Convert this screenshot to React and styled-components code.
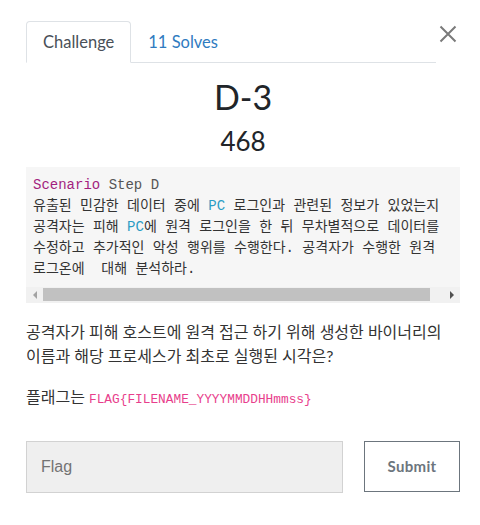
import React from 'react';
import styled, { createGlobalStyle } from 'styled-components';

const Global = createGlobalStyle`
  body {
    margin: 0;
    background: #fff;
    font-family: Lato, "Noto Sans CJK KR", sans-serif;
    color: #212529;
  }
`;

const Page = styled.div`
  padding: 21px 20px 0 26px;
`;

const Header = styled.div`
  display: flex;
  align-items: flex-start;
`;

const TabList = styled.ul`
  flex: 1;
  display: flex;
  list-style: none;
  margin: 0;
  padding: 0;
  border-bottom: 1px solid #dee2e6;
`;

const Tab = styled.li`
  padding: 8px 16px;
  font-size: 16.5px;
  line-height: 24px;
  border: 1px solid transparent;
  border-radius: 4px 4px 0 0;
  margin-bottom: -1px;
  cursor: pointer;
  color: ${p => (p.$active ? '#495057' : '#2f7bbf')};
  background: ${p => (p.$active ? '#fff' : 'transparent')};
  border-color: ${p => (p.$active ? '#dee2e6 #dee2e6 #fff' : 'transparent')};
`;

const Close = styled.button`
  width: 24px;
  height: 24px;
  margin-top: 1px;
  padding: 0;
  border: 0;
  background: none;
  display: flex;
  align-items: center;
  justify-content: center;
  color: #7a7a7a;
`;

const Title = styled.h1`
  margin: 14px 0 0;
  text-align: center;
  font-size: 34px;
  font-weight: 400;
  line-height: 1.2;
`;

const Points = styled.h2`
  margin: 8px 0 0;
  text-align: center;
  font-size: 26px;
  font-weight: 400;
  line-height: 1.2;
`;

const CodeBox = styled.div`
  margin-top: 10px;
  background: #f6f6f6;
  overflow: hidden;
`;

const Pre = styled.pre`
  margin: 0;
  padding: 8px 7px 7px;
  font-family: "Liberation Mono", "Noto Sans CJK KR", monospace;
  font-size: 14px;
  line-height: 21px;
  color: #333;
  white-space: pre;
  overflow: hidden;
`;

const Tok = styled.span`
  color: ${p => p.$c};
`;

const ScrollBar = styled.div`
  display: flex;
  align-items: center;
  height: 16px;
  background: #f1f1f1;
`;

const Arrow = styled.div`
  width: 17px;
  height: 16px;
  display: flex;
  align-items: center;
  justify-content: center;
  &::before {
    content: '';
    border-top: 4px solid transparent;
    border-bottom: 4px solid transparent;
    ${p => (p.$dir === 'left'
      ? 'border-right: 4px solid #a3a3a3;'
      : 'border-left: 4px solid #505050;')}
  }
`;

const Thumb = styled.div`
  flex: 1;
  height: 13px;
  margin-right: 13px;
  background: #c1c1c1;
`;

const Text = styled.p`
  margin: ${p => p.$mt || 0}px 0 0;
  font-size: 16px;
  line-height: 24px;
  color: #333;
`;

const FlagCode = styled.code`
  font-family: "Liberation Mono", monospace;
  font-size: 12.8px;
  color: #e83e8c;
`;

const Form = styled.form`
  display: flex;
  gap: 21px;
  margin-top: 29px;
`;

const Input = styled.input`
  flex: 1;
  min-width: 0;
  height: 52px;
  box-sizing: border-box;
  padding: 0 14px;
  background: #efefef;
  border: 1px solid #d2d2d2;
  font-family: "Liberation Sans", Arial, sans-serif;
  font-size: 16px;
  color: #495057;
  &::placeholder {
    color: #737373;
  }
`;

const Submit = styled.button`
  width: 96px;
  height: 51px;
  background: #fff;
  border: 1px solid #6c757d;
  color: #6c757d;
  font-family: Lato, sans-serif;
  font-weight: 700;
  font-size: 15px;
  letter-spacing: 0.3px;
`;

const PC = () => <Tok $c="#2a9cc4">PC</Tok>;

export default function App() {
  return (
    <Page>
      <Global />
      <Header>
        <TabList>
          <Tab $active>Challenge</Tab>
          <Tab>11 Solves</Tab>
        </TabList>
        <Close aria-label="Close">
          <svg width="18" height="18" viewBox="0 0 18 18">
            <path d="M1.5 1.5 L16.5 16.5 M16.5 1.5 L1.5 16.5" stroke="currentColor" strokeWidth="2" />
          </svg>
        </Close>
      </Header>

      <Title>D-3</Title>
      <Points>468</Points>

      <CodeBox>
        <Pre>
          <Tok $c="#a31f7f">Scenario</Tok> <Tok $c="#555">Step D</Tok>{'\n'}
          유출된 민감한 데이터 중에 <PC /> 로그인과 관련된 정보가 있었는지{'\n'}
          공격자는 피해 <PC />에 원격 로그인을 한 뒤 무차별적으로 데이터를{'\n'}
          수정하고 추가적인 악성 행위를 수행한다. 공격자가 수행한 원격{'\n'}
          로그온에  대해 분석하라.
        </Pre>
        <ScrollBar>
          <Arrow $dir="left" />
          <Thumb />
          <Arrow $dir="right" />
        </ScrollBar>
      </CodeBox>

      <Text $mt={17}>
        공격자가 피해 호스트에 원격 접근 하기 위해 생성한 바이너리의
        <br />
        이름과 해당 프로세스가 최초로 실행된 시각은?
      </Text>
      <Text $mt={17}>
        플래그는 <FlagCode>FLAG{'{'}FILENAME_YYYYMMDDHHmmss{'}'}</FlagCode>
      </Text>

      <Form onSubmit={e => e.preventDefault()}>
        <Input placeholder="Flag" />
        <Submit type="submit">Submit</Submit>
      </Form>
    </Page>
  );
}
